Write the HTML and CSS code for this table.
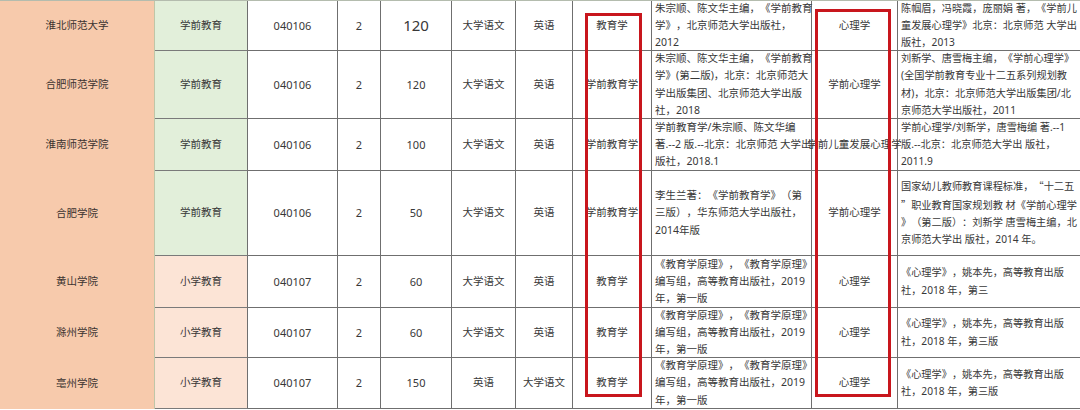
FILE: index.html
```html
<!DOCTYPE html>
<html lang="zh-CN">
<head>
<meta charset="utf-8">
<title>招生专业考试科目</title>
<link rel="stylesheet" href="styles.css">
</head>
<body>
<div class="sheet">
  <!-- row 1 -->
  <div class="c school"><p>淮北师范大学</p></div>
  <div class="c major green"><p>学前教育</p></div>
  <div class="c num"><p>040106</p></div>
  <div class="c num"><p>2</p></div>
  <div class="c num big"><p>120</p></div>
  <div class="c"><p>大学语文</p></div>
  <div class="c"><p>英语</p></div>
  <div class="c"><p>教育学</p></div>
  <div class="c t"><p>朱宗顺、陈文华主编，《学前教育<br>学》，北京师范大学出版社，<br>2012</p></div>
  <div class="c"><p>心理学</p></div>
  <div class="c t wide"><p>陈帼眉，冯晓霞，庞丽娟 著，《学前儿<br>童发展心理学》北京：北京师范 大学出<br>版社，2013</p></div>

  <!-- row 2 -->
  <div class="c school"><p>合肥师范学院</p></div>
  <div class="c major green"><p>学前教育</p></div>
  <div class="c num"><p>040106</p></div>
  <div class="c num"><p>2</p></div>
  <div class="c num"><p>120</p></div>
  <div class="c"><p>大学语文</p></div>
  <div class="c"><p>英语</p></div>
  <div class="c"><p>学前教育学</p></div>
  <div class="c t"><p>朱宗顺、陈文华主编，《学前教育<br>学》(第二版)，北京：北京师范大<br>学出版集团、北京师范大学出版<br>社，2018</p></div>
  <div class="c"><p>学前心理学</p></div>
  <div class="c t wide"><p>刘新学、唐雪梅主编，《学前心理学》<br>(全国学前教育专业十二五系列规划教<br>材)，北京：北京师范大学出版集团/北<br>京师范大学出版社，2011</p></div>

  <!-- row 3 -->
  <div class="c school"><p>淮南师范学院</p></div>
  <div class="c major green"><p>学前教育</p></div>
  <div class="c num"><p>040106</p></div>
  <div class="c num"><p>2</p></div>
  <div class="c num"><p>100</p></div>
  <div class="c"><p>大学语文</p></div>
  <div class="c"><p>英语</p></div>
  <div class="c"><p>学前教育学</p></div>
  <div class="c t"><p>学前教育学/朱宗顺、陈文华编<br>著.--2 版.--北京：北京师范 大学出<br>版社，2018.1</p></div>
  <div class="c"><p>学前儿童发展心理学</p></div>
  <div class="c t wide"><p>学前心理学/刘新学，唐雪梅编 著.--1<br>版.--北京：北京师范大学出 版社，<br>2011.9</p></div>

  <!-- row 4 -->
  <div class="c school"><p>合肥学院</p></div>
  <div class="c major green"><p>学前教育</p></div>
  <div class="c num"><p>040106</p></div>
  <div class="c num"><p>2</p></div>
  <div class="c num"><p>50</p></div>
  <div class="c"><p>大学语文</p></div>
  <div class="c"><p>英语</p></div>
  <div class="c"><p>学前教育学</p></div>
  <div class="c t"><p>李生兰著：《学前教育学》（第<br>三版），华东师范大学出版社，<br>2014年版</p></div>
  <div class="c"><p>学前心理学</p></div>
  <div class="c t wide"><p>国家幼儿教师教育课程标准，<span class="q">“</span>十二五<br><span class="q">”</span>职业教育国家规划教 材《学前心理学<br>》（第二版）：刘新学 唐雪梅主编，北<br>京师范大学出 版社，2014 年。</p></div>

  <!-- row 5 -->
  <div class="c school"><p>黄山学院</p></div>
  <div class="c major peach"><p>小学教育</p></div>
  <div class="c num"><p>040107</p></div>
  <div class="c num"><p>2</p></div>
  <div class="c num"><p>60</p></div>
  <div class="c"><p>大学语文</p></div>
  <div class="c"><p>英语</p></div>
  <div class="c"><p>教育学</p></div>
  <div class="c t"><p>《教育学原理》，《教育学原理》<br>编写组，高等教育出版社，2019<br>年，第一版</p></div>
  <div class="c"><p>心理学</p></div>
  <div class="c t wide"><p>《心理学》，姚本先，高等教育出版<br>社，2018 年，第三</p></div>

  <!-- row 6 -->
  <div class="c school"><p>滁州学院</p></div>
  <div class="c major peach"><p>小学教育</p></div>
  <div class="c num"><p>040107</p></div>
  <div class="c num"><p>2</p></div>
  <div class="c num"><p>60</p></div>
  <div class="c"><p>大学语文</p></div>
  <div class="c"><p>英语</p></div>
  <div class="c"><p>教育学</p></div>
  <div class="c t"><p>《教育学原理》，《教育学原理》<br>编写组，高等教育出版社，2019<br>年，第一版</p></div>
  <div class="c"><p>心理学</p></div>
  <div class="c t wide"><p>《心理学》，姚本先，高等教育出版<br>社，2018 年，第三版</p></div>

  <!-- row 7 -->
  <div class="c school"><p>亳州学院</p></div>
  <div class="c major peach"><p>小学教育</p></div>
  <div class="c num"><p>040107</p></div>
  <div class="c num"><p>2</p></div>
  <div class="c num"><p>150</p></div>
  <div class="c"><p>英语</p></div>
  <div class="c"><p>大学语文</p></div>
  <div class="c"><p>教育学</p></div>
  <div class="c t"><p>《教育学原理》，《教育学原理》<br>编写组，高等教育出版社，2019<br>年，第一版</p></div>
  <div class="c"><p>心理学</p></div>
  <div class="c t wide"><p>《心理学》，姚本先，高等教育出版<br>社，2018 年，第三版</p></div>

  <div class="mark mark-a"></div>
  <div class="mark mark-b"></div>
</div>
</body>
</html>
```

FILE: styles.css
```css
html, body {
  margin: 0;
  padding: 0;
  background: #ffffff;
}

body {
  width: 1080px;
  height: 410px;
  overflow: hidden;
  font-family: "Noto Sans", "Noto Sans CJK SC", sans-serif;
  font-size: 10.5px;
  color: #383838;
  text-spacing-trim: space-all;
}

.sheet {
  position: relative;
  width: 1080px;
  display: grid;
  grid-template-columns: 155px 93px 90px 43px 71px 64px 57px 79px 160px 86px 182px;
  grid-template-rows: 50px 68px 52px 85px 52px 50px 51px;
  border-top: 1px solid #b4bcae;
}

.c {
  min-width: 0;
  box-sizing: border-box;
  border-right: 1px solid #6f6f6f;
  border-bottom: 1px solid #6f6f6f;
  display: flex;
  align-items: center;
  justify-content: center;
  text-align: center;
  white-space: nowrap;
}

.c p {
  margin: 0;
  line-height: 17.3px;
}

.c.t {
  justify-content: flex-start;
  text-align: left;
  padding-left: 3px;
}

.c.wide {
  border-right: none;
  padding-left: 3px;
  font-size: 10.2px;
}

.q {
  font-family: "Noto Sans CJK SC", sans-serif;
}

.school {
  background: #f7caac;
  border-bottom: none;
  border-right: 1px solid #bfc6a8;
  color: #3b3330;
}

.major {
  border-bottom-color: #7a7a7a;
}

.green {
  background: #e2efda;
}

.peach {
  background: #fce4d6;
}

.num {
  font-size: 11px;
}

.num.big {
  font-size: 15px;
}

.mark {
  position: absolute;
  box-sizing: border-box;
  border: 3px solid #c8161d;
  pointer-events: none;
}

.mark-a {
  left: 585px;
  top: 12px;
  width: 57px;
  height: 384px;
}

.mark-b {
  left: 815px;
  top: 8px;
  width: 76px;
  height: 388px;
}
```
